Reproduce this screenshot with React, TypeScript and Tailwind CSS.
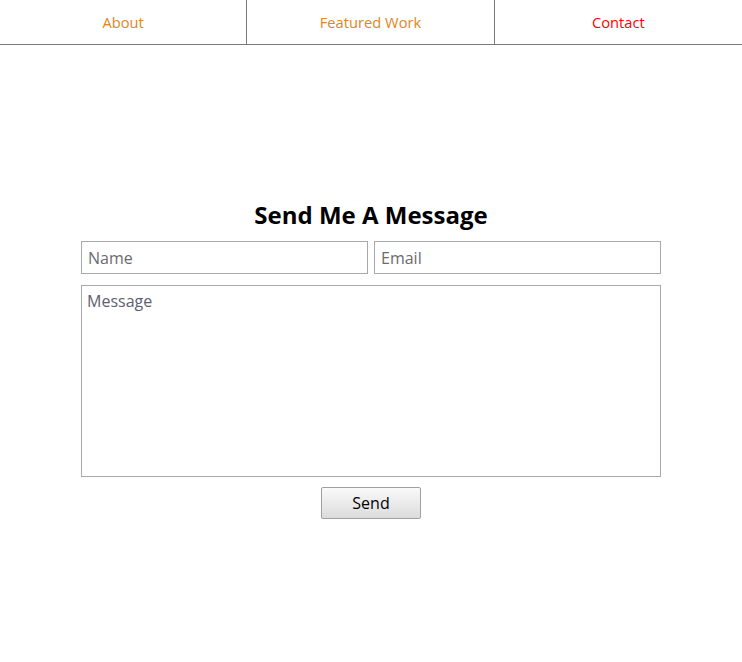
export default function App() {
  const font = { fontFamily: '"Open Sans", "Liberation Sans", sans-serif' };
  return (
    <div className="min-h-[662px] bg-white" style={font}>
      <nav className="grid grid-cols-3 border-b border-[#7a7a7a] h-[45px]">
        <a className="flex items-center justify-center text-[14.7px] text-[#e0861a] border-r border-[#7a7a7a]">About</a>
        <a className="flex items-center justify-center text-[14.7px] text-[#e0861a] border-r border-[#7a7a7a]">Featured Work</a>
        <a className="flex items-center justify-center text-[14.7px] text-[#ff0000]">Contact</a>
      </nav>
      <section className="w-[580px] mx-auto pt-[153px]">
        <h1 className="text-center text-[24px] font-bold leading-[33px] text-black">Send Me A Message</h1>
        <form className="mt-[10px] flex flex-col items-center">
          <div className="grid grid-cols-2 gap-[6px] w-full">
            <input
              placeholder="Name"
              className="h-[33px] border border-[#a9a9a9] px-[6px] text-[16px] placeholder:text-[#6b6b6b] outline-none"
            />
            <input
              placeholder="Email"
              className="h-[33px] border border-[#a9a9a9] px-[6px] text-[16px] placeholder:text-[#6b6b6b] outline-none"
            />
          </div>
          <textarea
            placeholder="Message"
            className="mt-[11px] w-full h-[192px] border border-[#a9a9a9] px-[5px] py-[3px] text-[16px] placeholder:text-[#5e5e72] resize-none outline-none"
          />
          <button
            type="button"
            className="mt-[10px] w-[100px] h-[32px] border border-[#a0a0a0] rounded-[2px] bg-gradient-to-b from-[#fafafa] to-[#dcdcdc] text-[16px] text-black"
          >
            Send
          </button>
        </form>
      </section>
    </div>
  );
}
